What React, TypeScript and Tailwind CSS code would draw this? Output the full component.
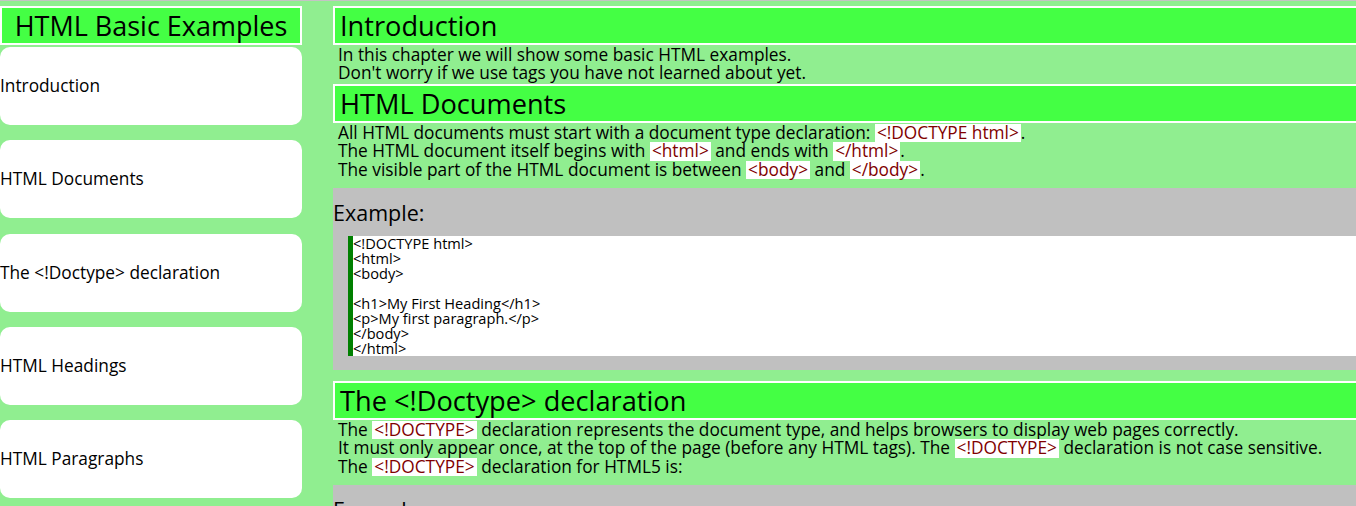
import React from 'react';

const menu = [
  'Introduction',
  'HTML Documents',
  'The <!Doctype> declaration',
  'HTML Headings',
  'HTML Paragraphs',
];

const code = `<!DOCTYPE html>
<html>
<body>

<h1>My First Heading</h1>
<p>My first paragraph.</p>
</body>
</html>`;

function Tag({ children }: { children: React.ReactNode }) {
  return (
    <span className="inline-block bg-white px-[2px] leading-[18.4px] text-[#800000]">
      {children}
    </span>
  );
}

function Heading({ children }: { children: React.ReactNode }) {
  return (
    <h2 className="flex h-[39px] items-center border-2 border-white bg-[#44ff44] pl-[5px] text-[27.2px] leading-none text-black">
      {children}
    </h2>
  );
}

function Para({ children }: { children: React.ReactNode }) {
  return (
    <p className="whitespace-nowrap py-[1px] pl-[5px] text-[17.3px] leading-[18.4px] text-black">
      {children}
    </p>
  );
}

function Example({ text }: { text: string }) {
  return (
    <div className="mt-[8px] bg-[#c0c0c0] pt-[13px] pb-[14px]">
      <h3 className="mb-[11px] text-[21.5px] leading-[24px] text-black">Example:</h3>
      <div className="ml-[15px] whitespace-pre border-l-[5px] border-[#008000] bg-white text-[14.6px] leading-[15px] text-black">
        {text}
      </div>
    </div>
  );
}

export default function App() {
  return (
    <div className="flex h-[506px] w-[1356px] overflow-hidden border-t border-[#c4c4c4] bg-[#90ee90] font-['Open_Sans',sans-serif]">
      {/* Sidebar */}
      <aside className="w-[302px] shrink-0 pt-[5px]">
        <div className="flex h-[39px] items-center justify-center border-2 border-white bg-[#44ff44] text-[27px] leading-none text-black">
          HTML Basic Examples
        </div>
        <nav className="mt-[2px] flex flex-col gap-[15.3px]">
          {menu.map((item) => (
            <div
              key={item}
              className="flex h-[78px] items-center rounded-[10px] bg-white text-[17.3px] text-black"
            >
              {item}
            </div>
          ))}
        </nav>
      </aside>

      {/* Content */}
      <main className="ml-[31px] w-[1040px] shrink-0 pt-[5px]">
        <Heading>Introduction</Heading>
        <Para>
          In this chapter we will show some basic HTML examples.
          <br />
          Don't worry if we use tags you have not learned about yet.
        </Para>

        <Heading>HTML Documents</Heading>
        <Para>
          All HTML documents must start with a document type declaration: <Tag>&lt;!DOCTYPE html&gt;</Tag>.
          <br />
          The HTML document itself begins with <Tag>&lt;html&gt;</Tag> and ends with <Tag>&lt;/html&gt;</Tag>.
          <br />
          The visible part of the HTML document is between <Tag>&lt;body&gt;</Tag> and <Tag>&lt;/body&gt;</Tag>.
        </Para>
        <Example text={code} />

        <div className="mt-[11px]">
          <Heading>The &lt;!Doctype&gt; declaration</Heading>
        </div>
        <Para>
          The <Tag>&lt;!DOCTYPE&gt;</Tag> declaration represents the document type, and helps browsers to display web pages correctly.
          <br />
          It must only appear once, at the top of the page (before any HTML tags). The <Tag>&lt;!DOCTYPE&gt;</Tag> declaration is not case sensitive.
          <br />
          The <Tag>&lt;!DOCTYPE&gt;</Tag> declaration for HTML5 is:
        </Para>
        <Example text={'<!DOCTYPE html>'} />
      </main>
    </div>
  );
}
